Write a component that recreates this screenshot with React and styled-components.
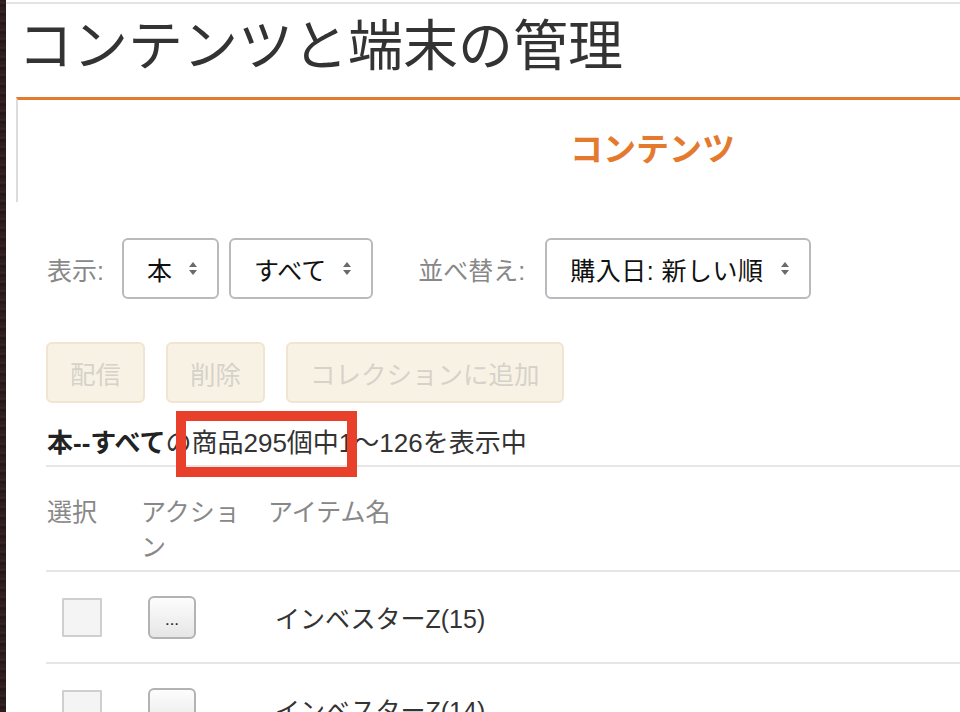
import React from "react";
import styled, { createGlobalStyle } from "styled-components";

const GlobalStyle = createGlobalStyle`
  html, body {
    margin: 0;
    padding: 0;
    background: #fff;
    overflow: hidden;
  }
  body {
    font-family: "Liberation Sans", "Noto Sans CJK JP", sans-serif;
    color: #333;
  }
`;

const Screen = styled.div`
  display: flex;
  width: 960px;
  height: 712px;
  overflow: hidden;
`;

const Desktop = styled.div`
  flex: 0 0 6px;
  background: repeating-linear-gradient(
    180deg,
    #2a1b1d 0px,
    #3b2426 3px,
    #1f1718 5px,
    #33201f 9px
  );
`;

const Page = styled.div`
  flex: 1;
  min-width: 0;
  padding-top: 2px;
`;

const TopRule = styled.div`
  height: 2px;
  background: #e3e3e3;
`;

const Title = styled.h1`
  margin: 9px 0 0 12px;
  font-size: 55px;
  font-weight: 400;
  line-height: 66px;
  color: #333;
  white-space: nowrap;
`;

const TabPanel = styled.div`
  margin: 18px 0 0 10px;
  height: 105px;
  box-sizing: border-box;
  border-top: 3px solid #e47a2e;
  border-left: 2px solid #dcdcdc;
  padding: 30px 0 0 552px;
`;

const TabTitle = styled.h2`
  margin: 0;
  font-size: 33px;
  line-height: 40px;
  font-weight: 700;
  color: #e47a2e;
  white-space: nowrap;
`;

const Content = styled.div`
  margin-left: 40px;
`;

const Controls = styled.div`
  display: flex;
  align-items: center;
  margin-top: 36px;
  height: 61px;
`;

const Label = styled.span`
  font-size: 25px;
  color: #888;
  margin-right: ${(p) => p.$gap}px;
  margin-left: ${(p) => p.$lead || 0}px;
  white-space: nowrap;
`;

const SelectBox = styled.div`
  display: flex;
  align-items: center;
  gap: 16px;
  height: 61px;
  box-sizing: border-box;
  padding: 0 19px 0 23px;
  margin-right: ${(p) => p.$gap || 0}px;
  border: 2px solid #b9b9be;
  border-radius: 6px;
  font-size: 25px;
  letter-spacing: ${(p) => p.$spacing || 0}px;
  color: #111;
  white-space: nowrap;
`;

const Actions = styled.div`
  display: flex;
  gap: 21px;
  margin-top: 43px;
`;

const DisabledButton = styled.button`
  height: 61px;
  padding: 0 22px;
  border: 2px solid #efe5d0;
  border-radius: 6px;
  background: #f8f2e5;
  color: #d6d2ca;
  font-family: inherit;
  font-size: 25.5px;
  white-space: nowrap;
`;

const Status = styled.div`
  position: relative;
  margin-top: 22px;
  padding: 0 0 4px 1px;
  line-height: 36px;
  font-size: 26px;
  color: #333;
  border-bottom: 2px solid #e6e6e6;
  white-space: nowrap;
`;

const Strong = styled.b`
  color: #222;
`;

const Highlight = styled.div`
  position: absolute;
  left: 130px;
  top: -14px;
  width: 181px;
  height: 66px;
  box-sizing: border-box;
  border: 10px solid #e8402a;
  pointer-events: none;
`;

const Row = styled.div`
  display: grid;
  grid-template-columns: 94px 127px 1fr;
  border-bottom: 2px solid #e6e6e6;
  align-items: ${(p) => (p.$head ? "start" : "center")};
  height: ${(p) => (p.$head ? 103 : 90)}px;
`;

const HeadCell = styled.div`
  padding: 28px 0 0 1px;
  font-size: 25px;
  line-height: 35px;
  color: #888;
  width: ${(p) => p.$w || "auto"};
`;

const Cell = styled.div`
  display: flex;
  align-items: center;
  padding-left: ${(p) => p.$pad}px;
`;

const CheckBox = styled.div`
  width: 40px;
  height: 39px;
  box-sizing: border-box;
  border: 2px solid #cfcfcf;
  border-radius: 1px;
  background: #f4f4f4;
`;

const MoreButton = styled.button`
  width: 48px;
  height: 43px;
  padding: 4px 0 0;
  border: 2px solid #b3b3b3;
  border-radius: 6px;
  background: linear-gradient(#fdfdfd, #e6e6e6);
  color: #222;
  font-family: inherit;
  font-size: 17px;
  line-height: 1;
`;

const ItemName = styled.span`
  font-size: 25px;
  color: #333;
  white-space: nowrap;
`;

const Arrows = () => (
  <svg width="10" height="15" viewBox="0 0 10 15">
    <path d="M5 1 L9 6 H1 Z" fill="#6a6a6a" />
    <path d="M5 14 L9 9 H1 Z" fill="#6a6a6a" />
  </svg>
);

const items = ["インベスターZ(15)", "インベスターZ(14)"];

export default function App() {
  return (
    <>
      <GlobalStyle />
      <Screen>
        <Desktop />
        <Page>
          <TopRule />
          <Title>コンテンツと端末の管理</Title>
          <TabPanel>
            <TabTitle>コンテンツ</TabTitle>
          </TabPanel>
          <Content>
            <Controls>
              <Label $gap={18} $lead={1}>
                表示:
              </Label>
              <SelectBox $gap={10}>
                本<Arrows />
              </SelectBox>
              <SelectBox $gap={45}>
                すべて<Arrows />
              </SelectBox>
              <Label $gap={20}>並べ替え:</Label>
              <SelectBox $spacing={0.5}>
                購入日: 新しい順<Arrows />
              </SelectBox>
            </Controls>
            <Actions>
              <DisabledButton disabled>配信</DisabledButton>
              <DisabledButton disabled>削除</DisabledButton>
              <DisabledButton disabled>コレクションに追加</DisabledButton>
            </Actions>
            <Status>
              <Strong>本--すべて</Strong>の商品295個中1〜126を表示中
              <Highlight />
            </Status>
            <Row $head>
              <HeadCell>選択</HeadCell>
              <HeadCell $w="104px">アクション</HeadCell>
              <HeadCell>アイテム名</HeadCell>
            </Row>
            {items.map((name) => (
              <Row key={name}>
                <Cell $pad={16}>
                  <CheckBox />
                </Cell>
                <Cell $pad={8}>
                  <MoreButton>...</MoreButton>
                </Cell>
                <Cell $pad={8}>
                  <ItemName>{name}</ItemName>
                </Cell>
              </Row>
            ))}
          </Content>
        </Page>
      </Screen>
    </>
  );
}
